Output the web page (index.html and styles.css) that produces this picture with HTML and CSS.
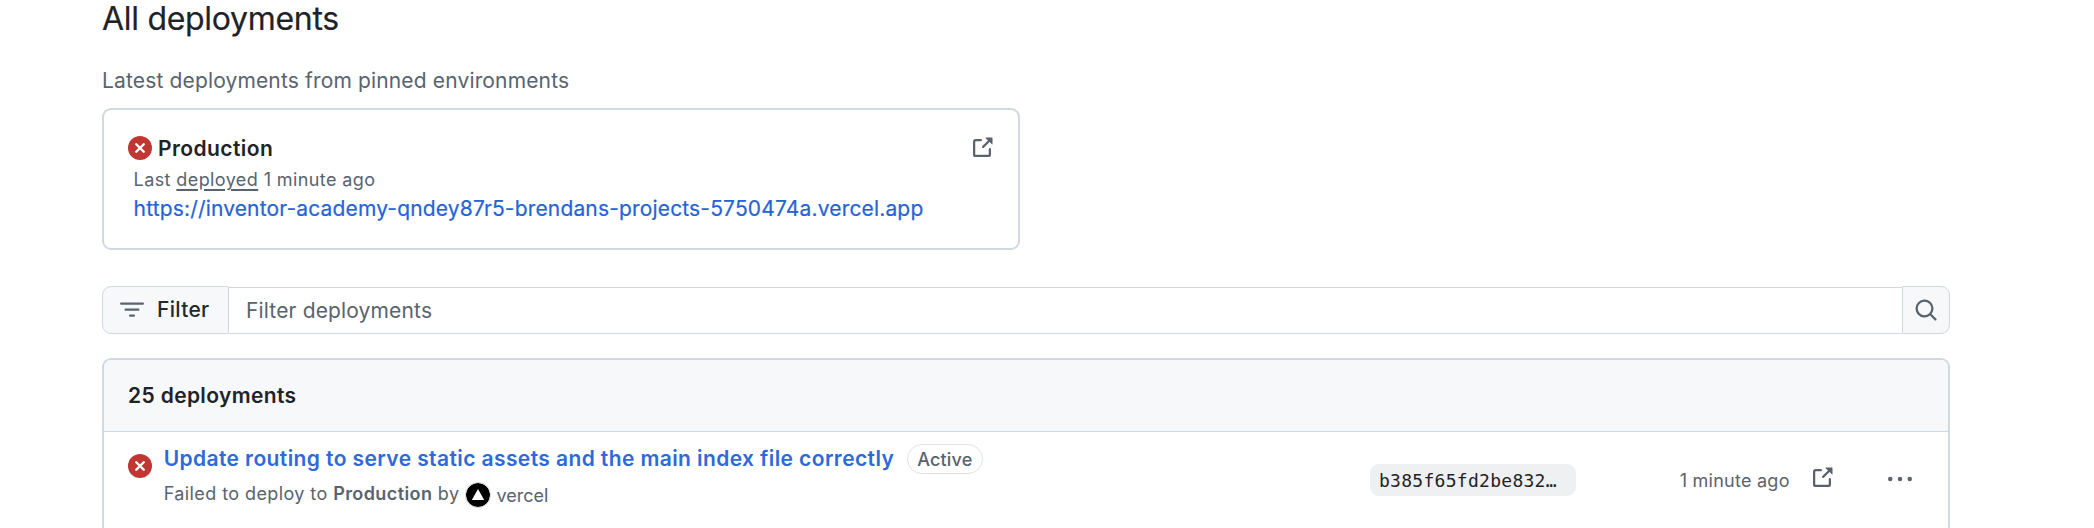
FILE: index.html
```html
<!DOCTYPE html>
<html lang="en">
<head>
<meta charset="utf-8">
<title>All deployments</title>
<link rel="stylesheet" href="styles.css">
</head>
<body>
<svg class="sprite" aria-hidden="true">
<symbol id="external" viewBox="0 0 16 16"><path d="M3.75 2h3.5a.75.75 0 0 1 0 1.5h-3.5a.25.25 0 0 0-.25.25v8.5c0 .138.112.25.25.25h8.5a.25.25 0 0 0 .25-.25v-3.5a.75.75 0 0 1 1.5 0v3.5A1.75 1.75 0 0 1 12.25 14h-8.5A1.75 1.75 0 0 1 2 12.25v-8.5C2 2.784 2.784 2 3.75 2Zm6.854-1h4.146a.25.25 0 0 1 .25.25v4.146a.25.25 0 0 1-.427.177L13.03 4.03 9.28 7.78a.751.751 0 0 1-1.042-.018.751.751 0 0 1-.018-1.042l3.75-3.75-1.543-1.543A.25.25 0 0 1 10.604 1Z"/></symbol>
<symbol id="failed" viewBox="0 0 16 16"><circle cx="8" cy="8" r="8" fill="#c03633"/><path d="M5.5 5.5l5 5m0-5l-5 5" stroke="#fff" stroke-width="1.6" stroke-linecap="round"/></symbol>
</svg>
<main class="page">
<h1 class="title">All deployments</h1>
<p class="subtitle">Latest deployments from pinned environments</p>
<section class="card">
<div class="card-head"><svg class="icon"><use href="#failed"/></svg><span class="env">Production</span><svg class="icon push"><use href="#external"/></svg></div>
<p class="last">Last <u>deployed</u> 1 minute ago</p>
<a class="url">https://inventor-academy-qndey87r5-brendans-projects-5750474a.vercel.app</a>
</section>
<div class="filter-bar">
<button class="filter-btn"><svg class="icon" viewBox="0 0 16 16"><path d="M.75 3h14.5a.75.75 0 0 1 0 1.5H.75a.75.75 0 0 1 0-1.5ZM3 7.75A.75.75 0 0 1 3.75 7h8.5a.75.75 0 0 1 0 1.5h-8.5A.75.75 0 0 1 3 7.75Zm3 4a.75.75 0 0 1 .75-.75h2.5a.75.75 0 0 1 0 1.5h-2.5a.75.75 0 0 1-.75-.75Z"/></svg><span>Filter</span></button>
<div class="filter-input">Filter deployments</div>
<button class="search-btn" aria-label="Search"><svg class="icon" viewBox="0 0 16 16"><path d="M10.68 11.74a6 6 0 0 1-7.922-8.982 6 6 0 0 1 8.982 7.922l3.04 3.04a.749.749 0 0 1-.326 1.275.749.749 0 0 1-.734-.215ZM11.5 7a4.499 4.499 0 1 0-8.997 0A4.499 4.499 0 0 0 11.5 7Z"/></svg></button>
</div>
<section class="list">
<header class="list-head">25 deployments</header>
<div class="row">
<svg class="icon row-status"><use href="#failed"/></svg>
<div class="row-main">
<div class="row-title"><a>Update routing to serve static assets and the main index file correctly</a><span class="pill">Active</span></div>
<div class="row-sub"><span class="desc">Failed to deploy to <b>Production</b> by</span><svg class="avatar" viewBox="0 0 24 24"><circle cx="12" cy="12" r="12"/><path d="M12 6l6.2 11H5.8z" fill="#fff"/></svg><span class="user">vercel</span></div>
</div>
<code class="sha">b385f65fd2be832…</code>
<span class="time">1 minute ago</span>
<svg class="icon row-link"><use href="#external"/></svg>
<svg class="icon kebab" viewBox="0 0 16 16"><path d="M8 9.5a1.5 1.5 0 1 0 0-3 1.5 1.5 0 0 0 0 3ZM1.5 9.5a1.5 1.5 0 1 0 0-3 1.5 1.5 0 0 0 0 3Zm13 0a1.5 1.5 0 1 0 0-3 1.5 1.5 0 0 0 0 3Z"/></svg>
</div>
</section>
</main>
</body>
</html>
```
FILE: styles.css
```css
* { box-sizing: border-box; }
body { margin: 0; height: 528px; overflow: hidden; background: #fff; color: #1f2328; font: 21px/30px Inter, "Noto Sans", sans-serif; }
h1, p { margin: 0; font-weight: 400; }
.sprite { display: none; }
.icon { width: 24px; height: 24px; flex: none; fill: #59636e; display: block; }
.page { padding: 0 144px 0 102px; }
.title { font-size: 32px; line-height: 48px; height: 42px; margin-top: -5px; letter-spacing: -.3px; -webkit-text-stroke: .2px; }
.subtitle { color: #59636e; margin-top: 29px; letter-spacing: .15px; }
.card { width: 918px; height: 142px; margin-top: 12px; border: 2px solid #d1d9e0; border-radius: 9px; padding: 24px; }
.card-head { display: flex; align-items: center; height: 28px; }
.env { font-weight: 600; margin-left: 6px; padding-top: 2px; letter-spacing: .42px; }
.push { margin-left: auto; }
.last { font-size: 18px; line-height: 27px; color: #59636e; padding-left: 5.6px; margin-top: 4px; letter-spacing: .4px; }
.last u { text-underline-offset: 3px; text-decoration-thickness: 2px; }
.url { display: block; margin-top: 1px; padding-left: 5.6px; color: #2563d6; letter-spacing: .16px; -webkit-text-stroke: .2px; }
.filter-bar { display: flex; align-items: flex-end; height: 48px; margin-top: 36px; }
.filter-btn, .search-btn { height: 48px; background: #f6f8fa; border: 1px solid #d1d9e0; display: flex; align-items: center; font: inherit; }
.filter-btn { width: 127px; border-radius: 9px 0 0 9px; padding: 0 0 0 17px; color: #25292e; font-weight: 500; letter-spacing: .3px; }
.filter-btn span { margin-left: 13px; }
.filter-input { flex: 1; height: 47px; border: solid #d1d9e0; border-width: 1px 0; padding: 8px 17px; color: #59636e; letter-spacing: .15px; }
.search-btn { width: 48px; border-radius: 0 9px 9px 0; padding: 0 11px; }
.list { margin-top: 24px; border: 2px solid #d1d9e0; border-radius: 9px 9px 0 0; border-bottom: 0; height: 172px; overflow: hidden; }
.list-head { height: 72px; background: #f6f8fa; border-bottom: 1px solid #d1d9e0; padding: 21px 24px; font-weight: 600; letter-spacing: .36px; }
.row { display: flex; align-items: flex-start; padding: 0 36px 0 24px; }
.row-status { margin-top: 22px; }
.row-main { width: 900px; margin: 12px 0 0 11.7px; }
.row-title { display: flex; align-items: center; color: #2e69d9; font-weight: 600; letter-spacing: .4px; }
.pill { margin-left: 13px; border: 1px solid #dde3e9; border-radius: 15px; width: 76px; height: 30px; padding: 0 9px; font-size: 18px; line-height: 29px; font-weight: 500; color: #59636e; letter-spacing: .15px; }
.row-sub { display: flex; align-items: center; color: #59636e; font-size: 18px; line-height: 27px; margin-top: 8px; }
.desc { letter-spacing: .41px; padding-bottom: 2px; margin-top: -2px; }
.row-sub b { font-weight: 600; }
.avatar { width: 24px; height: 24px; margin: -1px 6px 1px 7px; border-radius: 50%; box-shadow: 0 0 0 1px #d9dbdd; }
.sha { width: 206px; height: 32px; margin: 32px 0 0 306.3px; background: #eff0f2; border-radius: 9px; padding: 0 9px; font: 18px/34px "DejaVu Sans Mono", monospace; letter-spacing: .28px; }
.time { color: #59636e; font-size: 18px; line-height: 27px; margin: 35px 0 0 103.7px; width: 112.3px; white-space: nowrap; letter-spacing: .25px; }
.row-link { margin: 34px 0 0 18px; }
.kebab { margin: 35px 0 0 auto; }
```
